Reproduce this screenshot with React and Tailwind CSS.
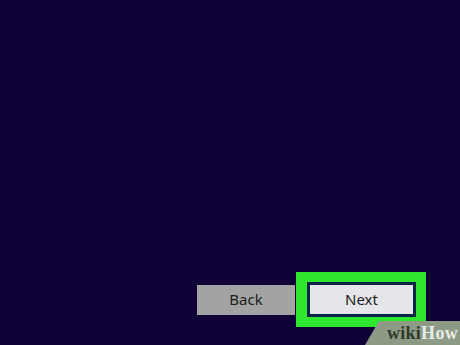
import React from "react";

const App = () => {
  return (
    <div className="relative w-[460px] h-[345px] overflow-hidden bg-[#0f0035] flex flex-col justify-end font-['Noto_Sans',sans-serif]">
      {/* Wizard buttons */}
      <div className="flex items-center pl-[197px] pb-[18px]">
        <button className="w-[98px] h-[30px] bg-[#a3a3a3] text-[#1c1c1c] text-[15px]">
          Back
        </button>
        <div className="ml-[1px] w-[130px] h-[55px] bg-[#2ee62e] pl-[11px] pt-[10px]">
          <button className="w-[109px] h-[35px] bg-[#e4e6ea] border-[3px] border-[#0b2547] text-[#1c1c1c] text-[15px]">
            Next
          </button>
        </div>
      </div>

      {/* watermark */}
      <svg className="absolute right-0 bottom-0" width="95" height="24" viewBox="0 0 95 24">
        <polygon points="0,24 14,0 95,0 95,24" fill="#8d9a86" />
      </svg>
      <div className="absolute right-[2px] bottom-[3px] font-['Liberation_Serif',serif] font-bold text-[18px] leading-none tracking-[0.3px]">
        <span className="text-[#2f3a2a]">wiki</span>
        <span className="text-[#e8ece6]">How</span>
      </div>
    </div>
  );
};

export default App;
